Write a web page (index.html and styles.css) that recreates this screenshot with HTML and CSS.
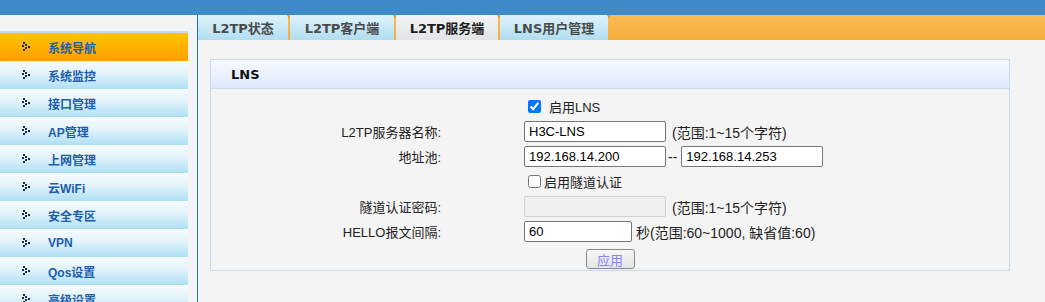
FILE: index.html
```html
<!DOCTYPE html>
<html lang="zh-CN">
<head>
<meta charset="utf-8">
<title>L2TP服务端</title>
<link rel="stylesheet" href="styles.css">
</head>
<body>
<div class="topbar"></div>
<div class="main">
  <aside class="sidebar">
    <div class="side-head"></div>
    <ul class="menu">
      <li class="item active"><svg class="ico" viewBox="0 0 8 10" width="8" height="10"><rect x="1" y="0" width="2" height="2"/><rect x="3" y="2" width="2" height="2"/><rect x="0" y="3" width="2" height="2"/><rect x="6" y="4" width="2" height="2"/><rect x="3" y="5" width="2" height="2"/><rect x="1" y="7" width="2" height="2"/></svg><span>系统导航</span></li>
      <li class="item"><svg class="ico" viewBox="0 0 8 10" width="8" height="10"><rect x="1" y="0" width="2" height="2"/><rect x="3" y="2" width="2" height="2"/><rect x="0" y="3" width="2" height="2"/><rect x="6" y="4" width="2" height="2"/><rect x="3" y="5" width="2" height="2"/><rect x="1" y="7" width="2" height="2"/></svg><span>系统监控</span></li>
      <li class="item"><svg class="ico" viewBox="0 0 8 10" width="8" height="10"><rect x="1" y="0" width="2" height="2"/><rect x="3" y="2" width="2" height="2"/><rect x="0" y="3" width="2" height="2"/><rect x="6" y="4" width="2" height="2"/><rect x="3" y="5" width="2" height="2"/><rect x="1" y="7" width="2" height="2"/></svg><span>接口管理</span></li>
      <li class="item"><svg class="ico" viewBox="0 0 8 10" width="8" height="10"><rect x="1" y="0" width="2" height="2"/><rect x="3" y="2" width="2" height="2"/><rect x="0" y="3" width="2" height="2"/><rect x="6" y="4" width="2" height="2"/><rect x="3" y="5" width="2" height="2"/><rect x="1" y="7" width="2" height="2"/></svg><span>AP管理</span></li>
      <li class="item"><svg class="ico" viewBox="0 0 8 10" width="8" height="10"><rect x="1" y="0" width="2" height="2"/><rect x="3" y="2" width="2" height="2"/><rect x="0" y="3" width="2" height="2"/><rect x="6" y="4" width="2" height="2"/><rect x="3" y="5" width="2" height="2"/><rect x="1" y="7" width="2" height="2"/></svg><span>上网管理</span></li>
      <li class="item"><svg class="ico" viewBox="0 0 8 10" width="8" height="10"><rect x="1" y="0" width="2" height="2"/><rect x="3" y="2" width="2" height="2"/><rect x="0" y="3" width="2" height="2"/><rect x="6" y="4" width="2" height="2"/><rect x="3" y="5" width="2" height="2"/><rect x="1" y="7" width="2" height="2"/></svg><span>云WiFi</span></li>
      <li class="item"><svg class="ico" viewBox="0 0 8 10" width="8" height="10"><rect x="1" y="0" width="2" height="2"/><rect x="3" y="2" width="2" height="2"/><rect x="0" y="3" width="2" height="2"/><rect x="6" y="4" width="2" height="2"/><rect x="3" y="5" width="2" height="2"/><rect x="1" y="7" width="2" height="2"/></svg><span>安全专区</span></li>
      <li class="item"><svg class="ico" viewBox="0 0 8 10" width="8" height="10"><rect x="1" y="0" width="2" height="2"/><rect x="3" y="2" width="2" height="2"/><rect x="0" y="3" width="2" height="2"/><rect x="6" y="4" width="2" height="2"/><rect x="3" y="5" width="2" height="2"/><rect x="1" y="7" width="2" height="2"/></svg><span>VPN</span></li>
      <li class="item"><svg class="ico" viewBox="0 0 8 10" width="8" height="10"><rect x="1" y="0" width="2" height="2"/><rect x="3" y="2" width="2" height="2"/><rect x="0" y="3" width="2" height="2"/><rect x="6" y="4" width="2" height="2"/><rect x="3" y="5" width="2" height="2"/><rect x="1" y="7" width="2" height="2"/></svg><span>Qos设置</span></li>
      <li class="item"><svg class="ico" viewBox="0 0 8 10" width="8" height="10"><rect x="1" y="0" width="2" height="2"/><rect x="3" y="2" width="2" height="2"/><rect x="0" y="3" width="2" height="2"/><rect x="6" y="4" width="2" height="2"/><rect x="3" y="5" width="2" height="2"/><rect x="1" y="7" width="2" height="2"/></svg><span>高级设置</span></li>
    </ul>
  </aside>
  <section class="content">
    <nav class="tabs">
      <a class="tab t1">L2TP状态</a>
      <a class="tab t2">L2TP客户端</a>
      <a class="tab t3 active">L2TP服务端</a>
      <a class="tab t4">LNS用户管理</a>
    </nav>
    <div class="panel">
      <div class="panel-head">LNS</div>
      <div class="panel-body">
        <div class="row">
          <div class="lbl"></div>
          <div class="val"><input type="checkbox" checked><span class="cb-text">启用LNS</span></div>
        </div>
        <div class="row">
          <div class="lbl">L2TP服务器名称:</div>
          <div class="val"><input class="txt w142" type="text" value="H3C-LNS"><span class="hint">(范围:1~15个字符)</span></div>
        </div>
        <div class="row">
          <div class="lbl">地址池:</div>
          <div class="val"><input class="txt w142" type="text" value="192.168.14.200"><span class="dash">--</span><input class="txt w142" type="text" value="192.168.14.253"></div>
        </div>
        <div class="row">
          <div class="lbl"></div>
          <div class="val"><input type="checkbox"><span class="cb-text tight">启用隧道认证</span></div>
        </div>
        <div class="row">
          <div class="lbl">隧道认证密码:</div>
          <div class="val"><input class="txt w142" type="text" disabled><span class="hint">(范围:1~15个字符)</span></div>
        </div>
        <div class="row">
          <div class="lbl">HELLO报文间隔:</div>
          <div class="val"><input class="txt w108" type="text" value="60"><span class="hint sec">秒(范围:60~1000, 缺省值:60)</span></div>
        </div>
        <div class="actions"><button class="btn" type="button">应用</button></div>
      </div>
    </div>
  </section>
</div>
</body>
</html>
```

FILE: styles.css
```css
html, body {
  margin: 0;
  padding: 0;
  height: 100%;
  overflow: hidden;
}
body {
  background: #f4f4f4;
  font-family: "Liberation Sans", "Noto Sans CJK SC", sans-serif;
  font-size: 13px;
  color: #222;
}
.topbar {
  height: 15px;
  background: #3f8ac9;
}
.main {
  display: flex;
  height: calc(100% - 15px);
}
.sidebar {
  width: 197px;
  flex: none;
  background: #f4f4f4;
}
.side-head {
  width: 188px;
  height: 16px;
  border-bottom: 2px solid #c9d8e8;
}
.menu {
  list-style: none;
  margin: 0;
  padding: 0;
  width: 188px;
}
.item {
  height: 28px;
  display: flex;
  align-items: center;
  background: linear-gradient(to bottom, #f7fcfe 0%, #e2f3fb 45%, #ade0f3 100%);
  font-family: "Liberation Sans", "Noto Sans CJK SC", sans-serif;
  font-weight: bold;
  font-size: 12px;
  color: #1c5eac;
}
.item.active {
  background: linear-gradient(to bottom, #ffc400 0%, #ffb200 50%, #ff9f00 100%);
}
.ico {
  margin-left: 22px;
  margin-right: 18px;
  fill: #1b2858;
  display: block;
}
.content {
  flex: 1;
  border-left: 1px solid #1a6fd0;
  min-width: 0;
}
.tabs {
  height: 25px;
  display: flex;
  gap: 2px;
  background: linear-gradient(to bottom, #f9bb55 0%, #f8b448 55%, #f7ad39 100%);
}
.tab {
  position: relative;
  display: flex;
  align-items: center;
  justify-content: center;
  height: 25px;
  background: linear-gradient(to bottom, #e0f3fa 0%, #c8e9f6 50%, #b0ddf0 100%);
  font-family: "DejaVu Sans", "Noto Sans CJK SC", sans-serif;
  font-weight: bold;
  font-size: 13px;
  color: #4a4a4a;
}
.tab::after {
  content: "";
  position: absolute;
  right: -3px;
  top: 0;
  width: 0;
  height: 0;
  border-left: 2px solid transparent;
  border-right: 2px solid transparent;
  border-top: 4px solid #ee9a2a;
}
.tab.active {
  background: linear-gradient(to bottom, #f3f3f3 0%, #eaeced 50%, #e1e5e7 100%);
  color: #1e1e1e;
}
.t1 { width: 90px; }
.t2 { width: 104px; }
.t3 { width: 102px; }
.t4 { width: 108px; }
.panel {
  margin: 19px 35px 0 12px;
}
.panel-head {
  height: 28px;
  border: 1px solid #c6daee;
  background: linear-gradient(to bottom, #f6f9ff 0%, #eaf1fd 55%, #dbe8fa 100%);
  display: flex;
  align-items: center;
  padding-left: 20px;
  font-family: "DejaVu Sans", "Noto Sans CJK SC", sans-serif;
  font-weight: bold;
  font-size: 13px;
  color: #111;
}
.panel-body {
  border: 1px solid #c6daee;
  border-top: none;
  padding: 5px 0 1px;
}
.row {
  display: grid;
  grid-template-columns: 230px 1fr;
  height: 25px;
  align-items: center;
}
.lbl {
  text-align: right;
  color: #222;
}
.val {
  display: flex;
  align-items: center;
  padding-left: 83px;
}
.val input[type="checkbox"] {
  margin: 3px 3px 3px 4px;
  width: 13px;
  height: 13px;
}
.cb-text {
  margin-left: 5px;
}
.cb-text.tight {
  margin-left: 0;
}
.txt {
  box-sizing: border-box;
  height: 21px;
  margin: 0;
  border: 1px solid #767676;
  border-radius: 2px;
  padding: 0 4px;
  font-family: "Liberation Sans", "Noto Sans CJK SC", sans-serif;
  font-size: 13px;
  color: #000;
  background: #fff;
}
.txt:disabled {
  background: #efefef;
  border-color: #cfcfcf;
}
.w142 { width: 142px; }
.w108 { width: 108px; }
.hint {
  margin-left: 6px;
  font-size: 14px;
}
.hint.sec {
  margin-left: 4px;
}
.dash {
  margin: 0 4px 0 2px;
  font-size: 14px;
}
.actions {
  display: flex;
  justify-content: center;
  margin-top: 5px;
}
.btn {
  width: 49px;
  height: 20px;
  padding: 0;
  border: 1px solid #8a8a8a;
  border-radius: 3px;
  background: linear-gradient(to bottom, #f6f6f6, #e6e6e6);
  font-family: "Liberation Sans", "Noto Sans CJK SC", sans-serif;
  font-size: 13px;
  color: #8585f5;
}
```
